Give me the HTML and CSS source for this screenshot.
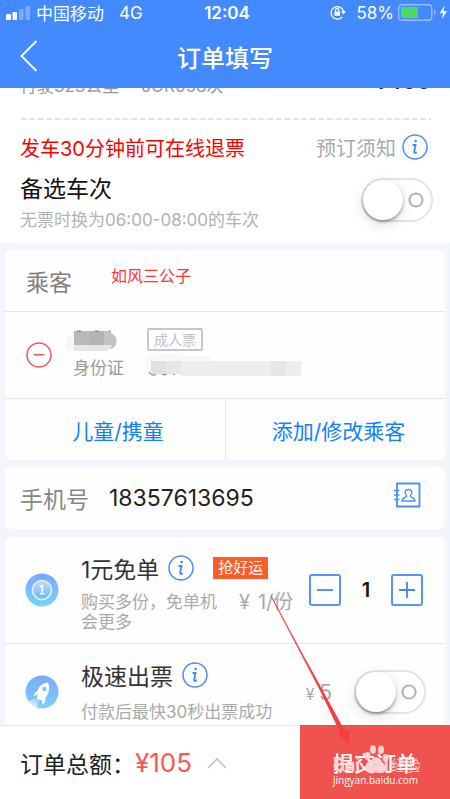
FILE: index.html
```html
<!DOCTYPE html>
<html lang="zh-CN">
<head>
<meta charset="utf-8">
<meta name="viewport" content="width=device-width, initial-scale=1">
<title>订单填写</title>
<link rel="stylesheet" href="styles.css">
</head>
<body>
<svg class="defs" aria-hidden="true">
  <symbol id="info" viewBox="0 0 26 26">
    <circle cx="13" cy="13" r="12" fill="none" stroke="#4a8efb" stroke-width="1.5"/>
    <circle cx="13.6" cy="7" r="1.3" fill="#3d86fb"/>
    <path d="M10.6 11h2.9l-1.3 6.6c-.2 1 .2 1.5 1 1.3l1.6-.5" fill="none" stroke="#3d86fb" stroke-width="1.8"/>
  </symbol>
</svg>
<div class="app">
  <header class="header">
    <div class="status">
      <div class="status-side">
        <svg class="signal" width="24" height="15" viewBox="0 0 24 15" aria-hidden="true">
          <rect x="0" y="9" width="5" height="6" rx="1" fill="#fff"/>
          <rect x="6.5" y="7" width="4.500" height="8" rx="1" fill="#fff"/>
          <rect x="13" y="4" width="4.500" height="11" rx="1" fill="#fff" opacity=".3"/>
          <rect x="19.500" y="1" width="4.500" height="14" rx="1" fill="#fff" opacity=".3"/>
        </svg>
        <span>中国移动</span>
        <span class="network">4G</span>
      </div>
      <span class="clock">12:04</span>
      <div class="status-side status-right">
        <svg width="16" height="15" viewBox="0 0 16 15" aria-hidden="true">
          <path d="M12.300 11.800A6.300 6.300 0 1 1 13.400 6" fill="none" stroke="#fff" stroke-width="1.300"/>
          <path d="M11 6h5l-2.500 3.400z" fill="#fff"/>
          <rect x="4.400" y="6.600" width="5.600" height="4.200" rx=".5" fill="#fff"/>
          <path d="M5.500 7V5.300a1.700 1.700 0 0 1 3.400 0V7" fill="none" stroke="#fff" stroke-width="1.100"/>
        </svg>
        <span class="percent">58%</span>
        <svg width="50" height="17" viewBox="0 0 50 17" aria-hidden="true">
          <rect x=".75" y=".75" width="33" height="15.500" rx="3" fill="none" stroke="#fff" stroke-opacity=".45" stroke-width="1.300"/>
          <rect x="3" y="3" width="17" height="11" rx="1" fill="#4cd964"/>
          <path d="M36 5.500c1.800.8 1.800 5 0 6z" fill="#fff" opacity=".45"/>
          <path d="M46.500 1.500l-4.700 7.700h3.400l-1.500 6 5.300-8h-3.500z" fill="#fff"/>
        </svg>
      </div>
    </div>
    <div class="nav">
      <button class="back" type="button" aria-label="返回">
        <svg width="18" height="32" viewBox="0 0 18 32"><path d="M16.500 1L1.500 16l15 15" fill="none" stroke="#fff" stroke-width="1.800"/></svg>
      </button>
      <h1 class="title">订单填写</h1>
    </div>
  </header>

  <main class="content">
    <section class="trip">
      <div class="trip-info">
        <span>行驶323公里</span>
        <span>JOR058次</span>
        <strong class="trip-price">¥400</strong>
      </div>
      <svg class="dashes" width="100%" height="2" aria-hidden="true"><line x1="1" y1="1" x2="100%" y2="1" stroke="#e0e4ea" stroke-width="2" stroke-dasharray="5.500 3"/></svg>
      <div class="refund">
        <span class="refund-text">发车30分钟前可在线退票</span>
        <a class="notice" href="#">预订须知<svg class="info" aria-hidden="true"><use href="#info"/></svg></a>
      </div>
      <div class="backup">
        <label for="backup">
          <span class="label-main">备选车次</span>
          <span class="label-sub">无票时换为06:00-08:00的车次</span>
        </label>
        <input class="switch" id="backup" type="checkbox">
      </div>
    </section>

    <section class="card">
      <div class="card-head">
        <h2 class="card-title">乘客</h2>
        <span class="remark">如风三公子</span>
      </div>
      <div class="passenger">
        <button class="remove" type="button" aria-label="删除乘客">
          <svg width="26" height="26" viewBox="0 0 26 26"><circle cx="13" cy="13" r="12" fill="none" stroke="#ee5858" stroke-width="1.500"/><path d="M7.500 12.700h11" stroke="#ee5858" stroke-width="1.500"/></svg>
        </button>
        <div class="passenger-main">
          <svg class="mask-name" width="54" height="22" viewBox="0 0 54 22" aria-hidden="true">
            <path d="M8 3Q0 8 0 15t4 5h5V3z" fill="#f7f7f7"/>
            <path d="M9 1h35l6 5q3 5 0 10l-3 3H9z" fill="#c3c3c3"/>
            <path d="M9 1h15v14H9z" fill="#b9b9b9"/>
            <path d="M24 1h15v14H24z" fill="#b3b3b3"/>
            <path d="M9 15h38q-1 6-8 6H9z" fill="#e5e5e5"/>
            <path d="M12 1h4M30 1h4M44 1h2" stroke="#777"/>
          </svg>
          <span class="id-type">身份证</span>
        </div>
        <div class="passenger-detail">
          <span class="tag-adult">成人票</span>
          <svg class="mask-id" width="156" height="23" viewBox="0 0 156 23" aria-hidden="true">
            <path d="M5 21V6q1-5 8-5h22v2h31v5H6z" fill="#f7f8fa"/>
            <path d="M0 10q0-6 6-7v16q-6-3-6-9z" fill="#f9f9fb"/>
            <path d="M4 19q3 5 7 2M16 20q3 3 6 1M28 21h2" fill="none" stroke="#888" stroke-width="1.300"/>
            <path d="M6 8h150v15H36v-2H6z" fill="#eee"/>
            <path d="M6 8h15v13H6z" fill="#e0e0e0"/>
            <path d="M21 8h15v13H21zM126 8h15v15h-15z" fill="#e7e7e7"/>
          </svg>
        </div>
      </div>
      <div class="card-actions">
        <button class="action" type="button">儿童/携童</button>
        <button class="action" type="button">添加/修改乘客</button>
      </div>
    </section>

    <section class="card phone">
      <label class="phone-label" for="phone">手机号</label>
      <input class="phone-input" id="phone" type="tel" value="18357613695">
      <button class="contacts" type="button" aria-label="通讯录">
        <svg width="27" height="26" viewBox="0 0 27 26" fill="none" stroke="#4a8efb">
          <path d="M3 1.500h22.500v23H3z" stroke-width="1.800"/>
          <path d="M0 8.500h5.500M0 13h5.500M0 17.500h5.500" stroke-width="1.300"/>
          <path d="M12.700 14.200c-3.200-4.600-.8-6.700 1.800-6.700s5 2.100 1.800 6.700c.4 1.300 4.700 1.300 4.700 4.800H8c0-3.500 4.300-3.500 4.700-4.800z" stroke-width="1.300"/>
        </svg>
      </button>
    </section>

    <section class="card services">
      <div class="service">
        <svg class="service-icon" viewBox="0 0 34 34" aria-hidden="true">
          <defs><linearGradient id="sky" x2="0" y2="1"><stop stop-color="#78a9fd"/><stop offset="1" stop-color="#7bd2fc"/></linearGradient>
          <linearGradient id="coin" x2="0" y2="1"><stop stop-color="#c4dafb"/><stop offset="1" stop-color="#63b8f5"/></linearGradient></defs>
          <circle cx="17" cy="17" r="16.500" fill="url(#sky)"/>
          <circle cx="17" cy="17" r="9.500" fill="url(#coin)" stroke="#dfeffe" stroke-width="1.700"/>
          <path d="M15 14l2.200-1.400v7.800M15 20.800h4.500" fill="none" stroke="#fff" stroke-width="1.500"/>
        </svg>
        <div class="service-text">
          <div class="service-head"><h2 class="service-title">1元免单</h2><button class="info-button" type="button" aria-label="1元免单说明"><svg class="info"><use href="#info"/></svg></button><span class="tag-hot">抢好运</span></div>
          <div class="service-line"><p class="service-sub">购买多份，免单机会更多</p><span class="unit-price"><span>¥</span><span>1/份</span></span></div>
        </div>
        <div class="stepper">
          <button class="step" type="button" aria-label="减少"><svg width="18" height="18" viewBox="0 0 18 18"><path d="M1 9h16" stroke="#4188f8" stroke-width="1.800"/></svg></button>
          <output class="count">1</output>
          <button class="step" type="button" aria-label="增加"><svg width="18" height="18" viewBox="0 0 18 18"><path d="M1 9h16M9 1v16" stroke="#4188f8" stroke-width="1.800"/></svg></button>
        </div>
      </div>
      <div class="service service-fast">
        <svg class="service-icon" viewBox="0 0 34 34" aria-hidden="true">
          <defs><linearGradient id="smoke" x1="1" y1="0" x2="0" y2="1"><stop stop-color="#fff" stop-opacity=".1"/><stop offset="1" stop-color="#fff"/></linearGradient></defs>
          <circle cx="17" cy="17" r="16.500" fill="url(#sky)"/>
          <path d="M11 23c-3 1-5 3-8 3l3 5 6 3 2-8z" fill="url(#smoke)"/>
          <path d="M23 7.500c-6 .5-9 4-10.500 8.500-2 .6-3.500 2.500-3.500 5l3.500-1.500-.5 4.500 5 1.500v4c3-1.500 4-4 3.300-6.500 3.500-4 5.200-10.500 2.700-15.500z" fill="#fff"/>
          <circle cx="19.500" cy="14" r="2.200" fill="#8abffc"/>
        </svg>
        <div class="service-text">
          <div class="service-head"><label class="service-title" for="fast">极速出票</label><button class="info-button" type="button" aria-label="极速出票说明"><svg class="info"><use href="#info"/></svg></button></div>
          <p class="service-sub">付款后最快30秒出票成功</p>
        </div>
        <span class="fast-price"><small>¥</small>5</span>
        <input class="switch" id="fast" type="checkbox">
      </div>
    </section>
  </main>

  <footer class="footer">
    <div class="total">
      <span>订单总额：</span><span class="amount">¥105</span>
      <svg class="chevron" width="20" height="12" viewBox="0 0 20 12" aria-hidden="true"><path d="M1 11l9-9 9 9" fill="none" stroke="#bcc1ca" stroke-width="1.600"/></svg>
    </div>
    <button class="submit" type="button">
      <span class="submit-label">提交订单</span>
      <span class="watermark">
        <span class="mark-top"><b>Bai</b><b class="mark-du">du</b><span class="mark-cn">经验</span></span>
        <svg class="paw" width="25" height="29" viewBox="0 0 25 29" aria-hidden="true"><g fill="#fbd3d3"><ellipse cx="3.500" cy="11" rx="3" ry="4"/><ellipse cx="9" cy="4.500" rx="3" ry="4.300"/><ellipse cx="17" cy="4.800" rx="3" ry="4.300"/><ellipse cx="21.500" cy="13" rx="3" ry="4"/><path d="M12 12c4 0 5 4 8 7 4 4 2 9-3 9-3 0-6-1-10 0-5 0-7-5-3-9 3-3 4-7 8-7z"/></g></svg>
        <span class="mark-url">jingyan.baidu.com</span>
      </span>
    </button>
  </footer>

  <svg class="pointer" width="84" height="152" viewBox="0 0 84 152" aria-hidden="true">
    <path d="M1 0L74.500 136l4-2v14.500L69 139l3.500-2z" fill="#f93c3c" stroke="#f93c3c" stroke-width=".7"/>
    <path d="M36 64L77 139l-5 2z" fill="#f93c3c"/>
  </svg>
</div>
</body>
</html>
```
FILE: styles.css
```css
* { box-sizing: border-box; }

body {
  margin: 0;
  font-family: Inter, "Noto Sans CJK SC", sans-serif;
  font-size: 17px;
  color: #222;
  background: #f2f5fb;
}

h1, h2, p { margin: 0; font-weight: 400; }

button {
  padding: 0;
  border: 0;
  background: none;
  font: inherit;
  color: inherit;
}

.defs { display: none; }
svg { display: block; flex: none; }

.app {
  position: relative;
  display: flex;
  flex-direction: column;
  height: 100vh;
  overflow: hidden;
}

/* Header */
.header {
  flex: none;
  background: #438aff;
  color: #fff;
}

.status {
  display: grid;
  grid-template-columns: 1fr auto 1fr;
  align-items: center;
  height: 24px;
  padding: 0 2px 0 6px;
}

.status-side {
  display: flex;
  align-items: center;
  gap: 6px;
  white-space: nowrap;
}

.status-right { justify-content: flex-end; gap: 4px; }
.percent { margin-left: 6px; }
.network { margin-left: 9px; }
.clock { font-weight: 600; }

.nav {
  display: grid;
  grid-template-columns: 60px 1fr 60px;
  align-items: center;
  height: 64px;
}

.back { padding-left: 20px; }
.title { text-align: center; font-size: 24px; font-weight: 500; }

/* Scrolling content */
.content {
  flex: 1;
  min-height: 0;
  overflow: hidden;
}

.trip {
  display: flow-root;
  height: 155px;
  padding: 0 19px 0 20px;
  background: #fff;
}

.trip-info {
  display: flex;
  gap: 22px;
  height: 24px;
  margin-top: -14px;
  line-height: 24px;
  color: #999;
}

.trip-price {
  margin-left: auto;
  font-size: 22px;
  line-height: 14px;
  font-weight: 600;
  color: #222;
}

.dashes { margin-top: 20px; }

.refund {
  display: flex;
  justify-content: space-between;
  align-items: center;
  margin-top: 12px;
  height: 30px;
  font-size: 20px;
}

.refund-text { color: #fb0000; }

.notice {
  display: flex;
  align-items: center;
  gap: 6px;
  margin-right: 3px;
  color: #aaa;
  text-decoration: none;
}

.info { width: 26px; height: 26px; }

.backup {
  display: flex;
  justify-content: space-between;
  align-items: center;
  margin-top: 10px;
}

.backup .switch { margin: 0 -2px 6px 0; }

.label-main, .label-sub { display: block; }
.label-main { font-size: 23px; line-height: 34px; color: #111; }
.label-sub { line-height: 28px; color: #b2b2b2; }

.switch {
  appearance: none;
  flex: none;
  width: 72px;
  height: 44px;
  margin: 0;
  border: 2px solid #e4e4e4;
  border-radius: 22px;
  background:
    radial-gradient(circle at 53px 20px, transparent 5px, #b5b5b5 6px, #b5b5b5 7px, transparent 8px),
    #fff;
}

.switch::before {
  content: "";
  display: block;
  width: 40px;
  height: 40px;
  border-radius: 50%;
  background: #fff;
  box-shadow: 0 2px 3px #0005, 0 4px 14px #0002;
}

/* Cards */
.card {
  margin: 7px 5px 0;
  border-radius: 6px;
  background: #fefefe;
}

.card-head {
  display: flex;
  align-items: center;
  gap: 39px;
  height: 62px;
  padding-left: 21px;
  border-bottom: 1px solid #e4e7ea;
}

.card-title { font-size: 23px; color: #808080; }
.remark { padding-bottom: 12px; font-size: 16px; color: #f33; }

.passenger {
  display: flex;
  align-items: center;
  height: 87px;
  padding-left: 21px;
  border-bottom: 1px solid #e4e7ea;
}

.passenger-main {
  display: flex;
  flex-direction: column;
  gap: 3px;
  width: 80px;
  margin-left: 13px;
}

.id-type { padding-left: 8px; line-height: 26px; color: #999; }

.passenger-detail {
  display: flex;
  flex-direction: column;
  gap: 2px;
  padding-bottom: 6px;
}

.tag-adult {
  align-self: flex-start;
  margin-left: 2px;
  padding: 0 5px;
  border: 2px solid #c2c8ce;
  border-radius: 2px;
  font-size: 14px;
  line-height: 19px;
  color: #bcc2c9;
}

.card-actions {
  display: grid;
  grid-template-columns: 1fr 1fr;
  height: 61px;
}

.action { padding-left: 6px; font-size: 21px; color: #0f80ff; }
.action + .action { border-left: 1px solid #e4e7ea; }

.phone {
  display: flex;
  align-items: center;
  height: 62px;
  padding: 0 24px 0 15px;
}

.phone-label { font-size: 23px; color: #888; }

.phone-input {
  flex: 1;
  min-width: 0;
  margin-left: 20px;
  padding: 0;
  border: 0;
  background: none;
  font: inherit;
  font-size: 23px;
  color: #222;
}

.contacts { padding-bottom: 6px; }

/* Services */
.service {
  display: flex;
  align-items: center;
  height: 106px;
  padding: 0 22px 0 20px;
}

.services { margin-top: 8px; }
.service + .service { border-top: 1px solid #dfe8ea; }
.service-icon { width: 34px; height: 34px; }
.service-text { flex: 1; margin-left: 22px; min-width: 0; }

.service-head {
  display: flex;
  align-items: center;
  height: 40px;
  margin-bottom: 4px;
}

.service-title { margin-right: 9px; font-size: 23px; color: #333; }

.tag-hot {
  margin-left: 19px;
  padding: 0 5px;
  font-size: 15px;
  line-height: 22px;
  color: #fff;
  background: #ff5c2b;
}

.service-line { display: flex; }
.service-line .service-sub { width: 140px; }
.service-sub { line-height: 20px; color: #aaa; }

.unit-price {
  display: flex;
  gap: 8px;
  margin-left: 18px;
  font-size: 20px;
  line-height: 20px;
  white-space: nowrap;
  color: #aaa;
}

.stepper { display: flex; align-items: center; }

.step {
  display: grid;
  place-items: center;
  width: 32px;
  height: 32px;
  border: 2px solid #5594fa;
  border-radius: 3px;
}

.count {
  width: 50px;
  text-align: center;
  font-size: 20px;
  font-weight: 600;
  color: #111;
}

.service-fast { height: 96px; padding-right: 19px; }
.service-fast .service-head { height: 34px; margin-bottom: 6px; }
.service-fast .service-sub { line-height: 28px; }
.fast-price { margin-right: 22px; font-size: 22px; color: #aaa; }
.fast-price small { margin-right: 4px; font-size: 16px; }

/* Footer */
.footer {
  display: grid;
  grid-template-columns: 2fr 1fr;
  flex: none;
  height: 74px;
  background: #fff;
}

.total {
  display: flex;
  align-items: center;
  padding-left: 20px;
  border-top: 1px solid #e7e9ed;
  font-size: 23px;
  white-space: nowrap;
}

.amount { color: #f55; font-size: 26px; }
.chevron { margin-left: 15px; }

.submit {
  position: relative;
  background: #ef524f;
  color: #fff;
}

.submit-label { font-size: 21px; font-weight: 500; }

.watermark {
  position: absolute;
  left: 33px;
  top: 20px;
  text-align: left;
  color: #fbd3d3;
}

.mark-top {
  display: flex;
  align-items: center;
  height: 38px;
  font-size: 18px;
}

.mark-du { margin-left: 6px; }
.mark-cn { margin-left: 2px; font-size: 15px; }
.paw { position: absolute; left: 31px; top: 0; }

.mark-url {
  position: absolute;
  left: 0;
  top: 28px;
  font-family: "Open Sans", sans-serif;
  font-size: 10px;
  color: #fff;
}

.pointer {
  position: absolute;
  left: 270px;
  top: 596px;
  pointer-events: none;
}
```
